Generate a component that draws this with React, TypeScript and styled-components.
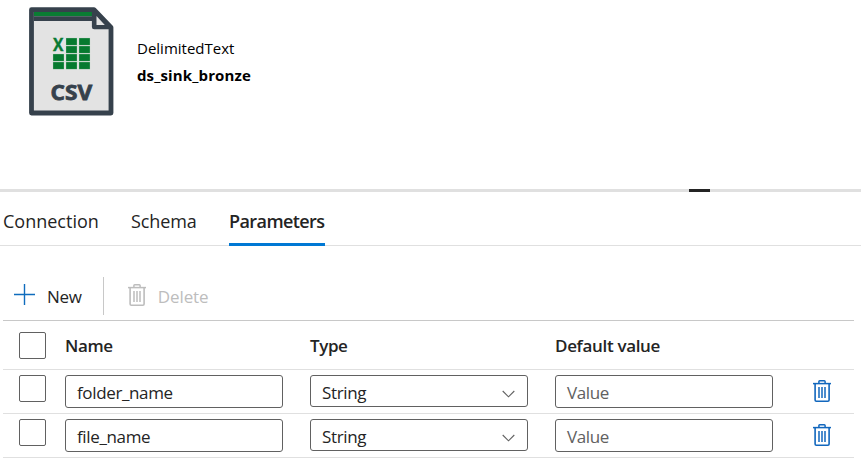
import React from "react";
import styled, { createGlobalStyle } from "styled-components";

const GlobalStyle = createGlobalStyle`
  * { box-sizing: border-box; }
  body {
    margin: 0;
    background: #fff;
    color: #242424;
    font-family: "Open Sans", "Noto Sans", sans-serif;
    overflow: hidden;
  }
`;

const Page = styled.main`
  width: 861px;
  height: 463px;
  display: flex;
  flex-direction: column;
  background: #fff;
`;

const DatasetHeader = styled.header`
  display: flex;
  height: 189px;
  flex: none;
  padding: 7px 0 0 29px;
  gap: 23px;
`;

const DatasetText = styled.div`
  padding-top: 28px;
  color: #000;
  font-size: 15px;
  line-height: 27px;
`;

const DatasetType = styled.div``;

const DatasetName = styled.div`
  font-weight: 700;
  letter-spacing: 0.13px;
`;

const Splitter = styled.div`
  height: 3px;
  flex: none;
  padding-left: 689px;
  background: #e0e0e0;
`;

const SplitterHandle = styled.div`
  width: 21px;
  height: 3px;
  background: #242424;
`;

const TabList = styled.nav`
  display: flex;
  height: 54px;
  flex: none;
  padding-left: 3px;
  border-bottom: 1px solid #e0e0e0;
`;

const Tab = styled.button<{ $active?: boolean; $width: number; $tracking: number }>`
  display: flex;
  align-items: flex-start;
  width: ${(p) => p.$width}px;
  height: 54px;
  margin: 0 32px 0 0;
  padding: 16px 0 0;
  border: 0;
  border-bottom: 3px solid ${(p) => (p.$active ? "#0078d4" : "transparent")};
  background: none;
  color: #242424;
  font-family: inherit;
  font-size: 18px;
  font-weight: ${(p) => (p.$active ? 600 : 400)};
  line-height: 26px;
  letter-spacing: ${(p) => p.$tracking}px;
  text-align: left;
  white-space: nowrap;
`;

const Toolbar = styled.div`
  display: flex;
  height: 74px;
  flex: none;
  padding: 31px 0 0 14px;
`;

const ToolButton = styled.button<{ $disabled?: boolean }>`
  display: flex;
  align-items: flex-start;
  height: 38px;
  gap: 12px;
  padding: 7px 0 0;
  border: 0;
  background: none;
  color: ${(p) => (p.$disabled ? "#bdbdbd" : "#242424")};
  font-family: inherit;
  font-size: 17px;
  line-height: 25px;
  letter-spacing: ${(p) => (p.$disabled ? -0.1 : -0.25)}px;
`;

const ToolDivider = styled.div`
  width: 1px;
  height: 38px;
  margin: 0 24px 0 21px;
  background: #c8c8c8;
`;

const Table = styled.div`
  width: 851px;
  margin-left: 3px;
  border-top: 1px solid #c8c8c8;
`;

const Row = styled.div<{ $header?: boolean }>`
  display: grid;
  grid-template-columns: 46px 245px 245px 257.5px 18px;
  align-items: start;
  height: ${(p) => (p.$header ? 49 : 44)}px;
  padding: ${(p) => (p.$header ? 11 : 5)}px 0 0 16px;
  border-bottom: 1px solid #e0e0e0;
`;

const HeaderCell = styled.div<{ $tracking: number }>`
  padding-top: 1px;
  font-size: 17px;
  font-weight: 600;
  line-height: 26px;
  letter-spacing: ${(p) => p.$tracking}px;
`;

const Checkbox = styled.div`
  width: 27px;
  height: 27px;
  border: 1px solid #616161;
  border-radius: 2px;
`;

const Field = styled.div<{ $placeholder?: boolean; $select?: boolean }>`
  display: flex;
  justify-content: space-between;
  width: 218px;
  height: ${(p) => (p.$select ? 32 : 33)}px;
  padding: 4px 12px 0 11px;
  border: 1px solid #616161;
  border-radius: 3px;
  color: ${(p) => (p.$placeholder ? "#616161" : "#242424")};
  font-size: 17px;
  line-height: 25px;
  letter-spacing: -0.36px;
`;

const Chevron = styled.svg`
  width: 13px;
  height: 8px;
  margin-top: 10px;
`;

const Trash = styled.svg<{ $color: string }>`
  width: 18px;
  height: 22px;
  flex: none;
  display: block;
  fill: none;
  stroke: ${(p) => p.$color};
`;

const TrashSlot = styled.div`
  padding-top: 5px;
`;

const TrashIcon = ({ color }: { color: string }) => (
  <Trash viewBox="0 0 18 22" $color={color}>
    <path d="M0 3.6H18" strokeWidth="1.5" />
    <path d="M5.9 3.5V1.6Q5.9.8 6.7.8H11.3Q12.1.8 12.1 1.6V3.5" strokeWidth="1.5" />
    <path d="M2.1 3.7V20Q2.1 21.2 3.3 21.2H14.9Q16.1 21.2 16.1 20V3.7" strokeWidth="1.6" />
    <path d="M6 7V18M9 7V18M12 7V18" strokeWidth="1.5" />
  </Trash>
);

const Plus = styled.svg`
  width: 21px;
  height: 21px;
  display: block;
`;

const FileSvg = styled.svg`
  width: 85px;
  height: 109px;
  flex: none;
  font-family: "Open Sans", sans-serif;
  font-weight: 700;
`;

const gridCells = [
  [37, 31], [50, 31],
  [37, 39], [50, 39],
  [24, 47], [37, 47], [50, 47],
  [24, 55], [37, 55], [50, 55],
];

const CsvFile = () => (
  <FileSvg viewBox="0 0 85 109">
    <path d="M2.5 2.7H65L82 20.5V106H2.5Z" fill="#e3e3e3" stroke="#36414c" strokeWidth="4.8" strokeLinejoin="round" />
    <path d="M5 5H63V9.2H5Z" fill="#0a7c33" />
    <path d="M5 9.2H64V14H5Z" fill="#36414c" />
    <path d="M64 3L82.5 22H64Z" fill="#36414c" />
    <path d="M65.2 5V20H81" fill="none" stroke="#36414c" strokeWidth="4.6" strokeLinejoin="round" />
    <path d="M67.5 9V18H75.8Z" fill="#e3e3e3" />
    {gridCells.map(([x, y]) => (
      <rect key={`${x}-${y}`} x={x} y={y} width="11" height="7.1" fill="#067a2f" stroke="#b9d4c1" strokeWidth=".3" />
    ))}
    <text x="23.9" y="44" fontSize="17" textLength="10.4" lengthAdjust="spacingAndGlyphs" fill="#087a32" stroke="#087a32" strokeWidth=".4">X</text>
    <text x="21.5" y="92.6" fontSize="22" textLength="41.6" lengthAdjust="spacingAndGlyphs" fill="#36414c" stroke="#36414c" strokeWidth=".8">CSV</text>
  </FileSvg>
);

const parameters = ["folder_name", "file_name"];

export default function App() {
  return (
    <>
      <GlobalStyle />
      <Page>
        <DatasetHeader>
          <CsvFile />
          <DatasetText>
            <DatasetType>DelimitedText</DatasetType>
            <DatasetName>ds_sink_bronze</DatasetName>
          </DatasetText>
        </DatasetHeader>
        <Splitter>
          <SplitterHandle />
        </Splitter>
        <TabList>
          <Tab $width={96} $tracking={0}>Connection</Tab>
          <Tab $width={66} $tracking={-0.1}>Schema</Tab>
          <Tab $width={96} $tracking={-0.58} $active>Parameters</Tab>
        </TabList>
        <Toolbar>
          <ToolButton>
            <Plus viewBox="0 0 21 21">
              <path d="M10.5 0V21M0 10.5H21" stroke="#0f6cbd" strokeWidth="1.4" />
            </Plus>
            <span>New</span>
          </ToolButton>
          <ToolDivider />
          <ToolButton $disabled>
            <TrashIcon color="#bdbdbd" />
            <span>Delete</span>
          </ToolButton>
        </Toolbar>
        <Table>
          <Row $header>
            <Checkbox />
            <HeaderCell $tracking={-0.4}>Name</HeaderCell>
            <HeaderCell $tracking={-0.4}>Type</HeaderCell>
            <HeaderCell $tracking={-0.32}>Default value</HeaderCell>
          </Row>
          {parameters.map((name) => (
            <Row key={name}>
              <Checkbox />
              <Field>{name}</Field>
              <Field $select>
                String
                <Chevron viewBox="0 0 13 8">
                  <path d="M.7 1L6.5 6.8L12.3 1" fill="none" stroke="#616161" strokeWidth="1.1" />
                </Chevron>
              </Field>
              <Field $placeholder>Value</Field>
              <TrashSlot>
                <TrashIcon color="#1267bd" />
              </TrashSlot>
            </Row>
          ))}
        </Table>
      </Page>
    </>
  );
}
